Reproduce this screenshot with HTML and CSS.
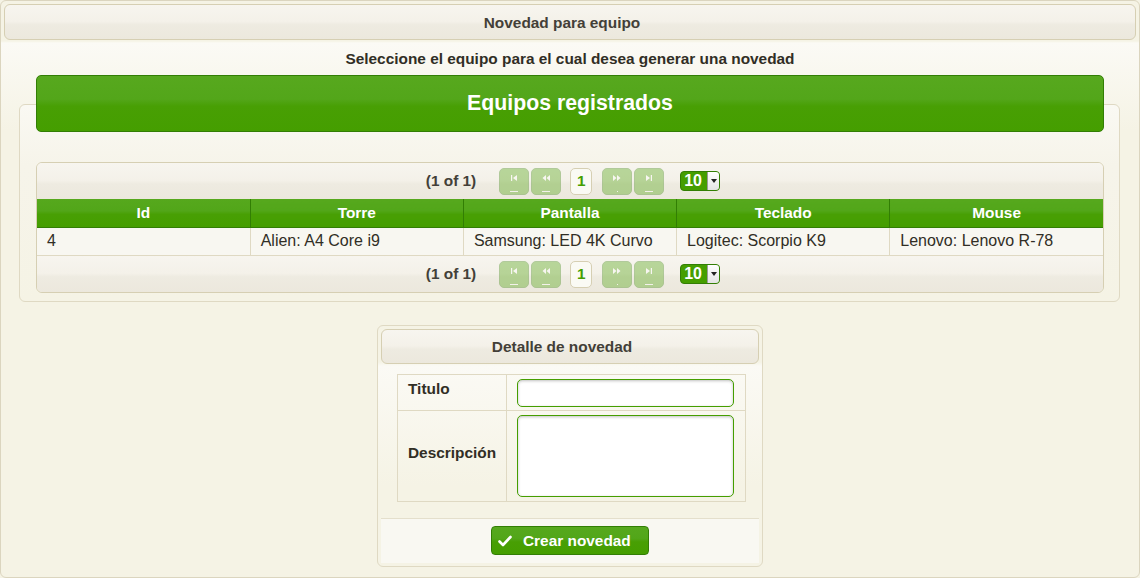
FILE: index.html
```html
<!DOCTYPE html>
<html lang="es">
<head>
<meta charset="utf-8">
<title>Novedad para equipo</title>
<link rel="stylesheet" href="styles.css">
</head>
<body>
<div class="page">
  <div class="bar page-title">Novedad para equipo</div>
  <div class="subtitle">Seleccione el equipo para el cual desea generar una novedad</div>

  <div class="section">
    <div class="green-head">Equipos registrados</div>
    <div class="list-panel">
      <div class="datatable">
        <div class="paginator">
          <span class="pg-current">(1 of 1)</span>
          <span class="pg-btn pg-first"><svg viewBox="0 0 8 8" width="8" height="8"><rect x="1" y="1" width="1.2" height="6" fill="#fff"/><path d="M7 1 L3 4 L7 7 Z" fill="#fff"/></svg><i class="pg-under"></i></span>
          <span class="pg-btn pg-prev"><svg viewBox="0 0 8 8" width="8" height="8"><path d="M4 1 L0.5 4 L4 7 Z M8 1 L4.5 4 L8 7 Z" fill="#fff"/></svg><i class="pg-under"></i></span>
          <span class="pg-page">1</span>
          <span class="pg-btn pg-next"><svg viewBox="0 0 8 8" width="8" height="8"><path d="M0 1 L3.5 4 L0 7 Z M4 1 L7.5 4 L4 7 Z" fill="#fff"/></svg><i class="pg-dot"></i></span>
          <span class="pg-btn pg-last"><svg viewBox="0 0 8 8" width="8" height="8"><path d="M1 1 L5 4 L1 7 Z" fill="#fff"/><rect x="5.8" y="1" width="1.2" height="6" fill="#fff"/></svg><i class="pg-under"></i></span>
          <span class="pg-select"><span class="pg-select-val">10</span><span class="pg-select-arrow"><svg viewBox="0 0 6 4" width="6" height="4"><path d="M0 0 L6 0 L3 4 Z" fill="#222"/></svg></span></span>
        </div>
        <table class="grid">
          <thead>
            <tr><th>Id</th><th>Torre</th><th>Pantalla</th><th>Teclado</th><th>Mouse</th></tr>
          </thead>
          <tbody>
            <tr><td>4</td><td>Alien: A4 Core i9</td><td>Samsung: LED 4K Curvo</td><td>Logitec: Scorpio K9</td><td>Lenovo: Lenovo R-78</td></tr>
          </tbody>
        </table>
        <div class="paginator paginator-bottom">
          <span class="pg-current">(1 of 1)</span>
          <span class="pg-btn pg-first"><svg viewBox="0 0 8 8" width="8" height="8"><rect x="1" y="1" width="1.2" height="6" fill="#fff"/><path d="M7 1 L3 4 L7 7 Z" fill="#fff"/></svg><i class="pg-under"></i></span>
          <span class="pg-btn pg-prev"><svg viewBox="0 0 8 8" width="8" height="8"><path d="M4 1 L0.5 4 L4 7 Z M8 1 L4.5 4 L8 7 Z" fill="#fff"/></svg><i class="pg-under"></i></span>
          <span class="pg-page">1</span>
          <span class="pg-btn pg-next"><svg viewBox="0 0 8 8" width="8" height="8"><path d="M0 1 L3.5 4 L0 7 Z M4 1 L7.5 4 L4 7 Z" fill="#fff"/></svg><i class="pg-dot"></i></span>
          <span class="pg-btn pg-last"><svg viewBox="0 0 8 8" width="8" height="8"><path d="M1 1 L5 4 L1 7 Z" fill="#fff"/><rect x="5.8" y="1" width="1.2" height="6" fill="#fff"/></svg><i class="pg-under"></i></span>
          <span class="pg-select"><span class="pg-select-val">10</span><span class="pg-select-arrow"><svg viewBox="0 0 6 4" width="6" height="4"><path d="M0 0 L6 0 L3 4 Z" fill="#222"/></svg></span></span>
        </div>
      </div>
    </div>
  </div>

  <div class="detail">
    <div class="bar detail-title">Detalle de novedad</div>
    <table class="form">
      <tr class="row-title">
        <td class="lbl">Titulo</td>
        <td class="fld"><input class="input" type="text"></td>
      </tr>
      <tr class="row-desc">
        <td class="lbl">Descripción</td>
        <td class="fld"><textarea class="textarea"></textarea></td>
      </tr>
    </table>
    <div class="detail-footer">
      <button class="btn" type="button"><svg viewBox="0 0 14 12" width="14" height="12"><path d="M1.5 6.5 L5 10 L12.5 2" fill="none" stroke="#fff" stroke-width="2.6" stroke-linecap="round" stroke-linejoin="round"/></svg><span>Crear novedad</span></button>
    </div>
  </div>
</div>
</body>
</html>
```

FILE: styles.css
```css
* { box-sizing: border-box; }

html, body {
  margin: 0;
  padding: 0;
  background: #f5f3e5;
}

body {
  font-family: "Liberation Sans", Arial, sans-serif;
  color: #312e25;
}

.page {
  width: 1140px;
  height: 578px;
  border: 1px solid #dbd5bf;
  border-radius: 6px;
  padding: 3px;
  background: linear-gradient(#f5f3e5 0px, #f5f3e5 40px, #fbfaf5 42px, #f5f3e5 130px, #f5f3e5 100%);
}

.bar {
  border: 1px solid #d6cfb3;
  border-radius: 6px;
  background: linear-gradient(#f7f5ef 0%, #f4f1e9 48%, #eeebe1 58%, #ece8dd 100%);
  color: #433f38;
  font-weight: bold;
  font-size: 15.4px;
  text-align: center;
  padding-right: 16px;
}

.page-title {
  height: 36px;
  line-height: 35px;
}

.subtitle {
  height: 35px;
  padding-top: 10px;
  line-height: 18px;
  font-size: 15.4px;
  font-weight: bold;
  text-align: center;
  color: #312e25;
}

.section {
  padding: 0 16px 0 15px;
}

.green-head {
  position: relative;
  z-index: 1;
  margin: 0 16px 0 17px;
  height: 57px;
  line-height: 55px;
  border: 1px solid #327e04;
  border-radius: 5px;
  background: linear-gradient(#57a81e 0%, #53a61a 42%, #489f04 55%, #459e00 100%);
  color: #fff;
  text-align: center;
  font-weight: bold;
  font-size: 21.3px;
}

.list-panel {
  margin-top: -28px;
  height: 198px;
  border: 1px solid #dfd9c3;
  border-radius: 6px;
  padding: 57px 15px 0 16px;
  background: linear-gradient(#faf9f3 0px, #f6f4ea 60px, #f5f3e5 100%);
}

.datatable {
  border: 1px solid #d6cfb3;
  border-radius: 6px;
  overflow: hidden;
}

.paginator {
  height: 36px;
  display: flex;
  align-items: center;
  justify-content: center;
  padding-left: 6px;
  background: linear-gradient(#f7f5ef 0%, #f4f1e9 48%, #eeebe1 58%, #ece8dd 100%);
}

.paginator-bottom {
  height: 37px;
  border-top: 1px solid #dfd9c3;
}

.pg-current {
  font-weight: bold;
  font-size: 15.4px;
  color: #433f38;
  margin-right: 23px;
}

.pg-btn {
  position: relative;
  width: 30px;
  height: 27px;
  border: 1px solid #327e04;
  border-radius: 5px;
  background: #459e00;
  opacity: 0.35;
  display: flex;
  align-items: center;
  justify-content: center;
  padding-bottom: 6px;
}

.pg-first { margin-right: 2px; }
.pg-prev { margin-right: 9px; }
.pg-next { margin-right: 2px; }
.pg-last { margin-right: 16px; }

.pg-under {
  position: absolute;
  left: 10px;
  bottom: 2px;
  width: 8px;
  height: 1px;
  background: #fff;
}

.pg-dot {
  position: absolute;
  left: 14px;
  bottom: 2px;
  width: 1px;
  height: 1px;
  background: #fff;
}

.pg-page {
  width: 22px;
  height: 27px;
  border: 1px solid #d6cfb3;
  border-radius: 5px;
  background: #fafaf4;
  color: #459e00;
  font-weight: bold;
  font-size: 15.4px;
  display: flex;
  align-items: center;
  justify-content: center;
  margin-right: 10px;
}

.pg-select {
  display: flex;
  align-items: stretch;
  width: 40px;
  height: 20px;
  border: 1px solid #327e04;
  border-radius: 4px;
  background: #459e00;
  overflow: hidden;
}

.pg-select-val {
  flex: 1;
  color: #fff;
  font-weight: bold;
  font-size: 16px;
  line-height: 18px;
  padding-left: 3px;
}

.pg-select-arrow {
  width: 12px;
  background: linear-gradient(#ffffff, #e4e4e4);
  border-left: 1px solid #9a9a9a;
  display: flex;
  align-items: center;
  justify-content: center;
}

.grid {
  width: 100%;
  border-collapse: collapse;
  table-layout: fixed;
}

.grid th {
  height: 28px;
  padding: 0 10px;
  border: 1px solid #327e04;
  border-top: none;
  background: linear-gradient(#56a81d 0%, #52a619 42%, #489f04 55%, #459e00 100%);
  color: #fff;
  font-weight: bold;
  font-size: 15.4px;
  text-align: center;
}

.grid th:first-child, .grid td:first-child { border-left: none; }
.grid th:last-child, .grid td:last-child { border-right: none; }

.grid td {
  height: 28px;
  padding: 0 10px;
  border-left: 1px solid #dfd9c3;
  border-right: 1px solid #dfd9c3;
  background: #f8f7f1;
  font-size: 16px;
  color: #312e25;
}

.detail {
  width: 386px;
  height: 242px;
  margin: 23px auto 0;
  border: 1px solid #dfd9c3;
  border-radius: 6px;
  padding: 3px;
  background: linear-gradient(#f5f3e5 0px, #f5f3e5 36px, #fbfaf5 40px, #f5f3e5 160px);
  display: flex;
  flex-direction: column;
}

.detail-title {
  height: 35px;
  line-height: 34px;
}

.form {
  width: 349px;
  margin: 10px 0 0 16px;
  border-collapse: collapse;
  table-layout: fixed;
}

.form td {
  border: 1px solid #dfd9c3;
  padding: 0 10px;
}

.form .lbl {
  width: 109px;
  font-weight: bold;
  font-size: 15.4px;
  color: #312e25;
  vertical-align: middle;
}

.row-title td { height: 36px; }
.row-title .lbl { padding-bottom: 8px; }
.row-desc td { height: 91px; }
.row-desc .lbl { padding-bottom: 6px; }

.form .fld {
  padding: 3px 10px 3px 10px;
}

.input, .textarea {
  display: block;
  width: 217px;
  border: 1px solid #459e00;
  border-radius: 5px;
  background: #fff;
  box-shadow: inset 0 1px 3px rgba(0, 0, 0, 0.25);
  font-family: inherit;
  margin: 0;
  padding: 0;
  resize: none;
}

.input { height: 28px; }
.textarea { height: 82px; }

.detail-footer {
  margin-top: 16px;
  flex: 1;
  border-top: 1px solid #e4dfcc;
  background: #f9f8f2;
  display: flex;
  justify-content: center;
  padding-top: 7px;
}

.btn {
  width: 158px;
  height: 29px;
  border: 1px solid #327e04;
  border-radius: 4px;
  background: linear-gradient(#56a81d 0%, #52a619 42%, #489f04 55%, #459e00 100%);
  color: #fff;
  font-family: inherit;
  font-weight: bold;
  font-size: 15.4px;
  display: flex;
  align-items: center;
  gap: 11px;
  padding: 0 0 0 6px;
  margin: 0;
}
```
